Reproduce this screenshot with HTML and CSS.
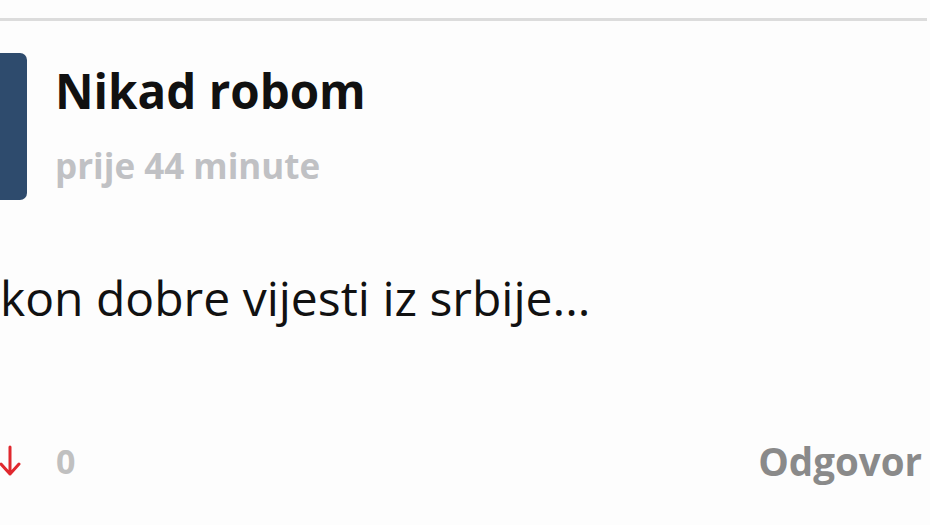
FILE: index.html
```html
<!DOCTYPE html>
<html>
<head>
<meta charset="utf-8">
<link rel="stylesheet" href="styles.css">
</head>
<body>
<div class="page">
  <div class="rule"></div>
  <div class="comment">
    <div class="head">
      <div class="avatar"></div>
      <div class="meta">
        <div class="name">Nikad robom</div>
        <div class="time">prije 44 minute</div>
      </div>
    </div>
    <p class="text">kon dobre vijesti iz srbije...</p>
    <div class="actions">
      <div class="votes">
        <svg class="arrow" width="24" height="32" viewBox="0 0 24 32"><path d="M10 2 V29 M1 19 L10 29 L19 19" fill="none" stroke="#e0282e" stroke-width="3" stroke-linecap="round" stroke-linejoin="round"/></svg>
        <span class="count">0</span>
      </div>
      <div class="reply">Odgovor</div>
    </div>
  </div>
</div>
</body>
</html>
```
FILE: styles.css
```css
html, body {
  margin: 0;
  padding: 0;
  background: #fdfdfd;
}
.page {
  width: 930px;
  height: 525px;
  overflow: hidden;
  font-family: "Open Sans", "Noto Sans", sans-serif;
}
.rule {
  margin-top: 18px;
  width: 927px;
  height: 3px;
  background: #dcdcdc;
}
.comment {
  padding-top: 32px;
}
.head {
  display: flex;
  align-items: flex-start;
  gap: 28px;
}
.avatar {
  width: 27px;
  height: 147px;
  background: #2e4b6d;
  border-radius: 0 7px 7px 0;
}
.meta {
  display: flex;
  flex-direction: column;
}
.name {
  font-weight: 700;
  font-size: 47.5px;
  line-height: 64px;
  margin-top: 6px;
  color: #111;
}
.time {
  font-weight: 700;
  font-size: 35px;
  line-height: 46px;
  margin-top: 20px;
  color: #c0c1c4;
}
.text {
  margin: 66px 0 0 0;
  font-size: 48px;
  line-height: 64px;
  color: #111;
}
.actions {
  display: flex;
  justify-content: space-between;
  align-items: center;
  margin-top: 105px;
  padding-right: 8px;
}
.votes {
  display: flex;
  align-items: center;
  gap: 32px;
}
.arrow {
  display: block;
}
.count {
  font-weight: 700;
  font-size: 34px;
  color: #c0c0c0;
}
.reply {
  font-weight: 700;
  font-size: 38.5px;
  color: #8a8a8a;
}
```
